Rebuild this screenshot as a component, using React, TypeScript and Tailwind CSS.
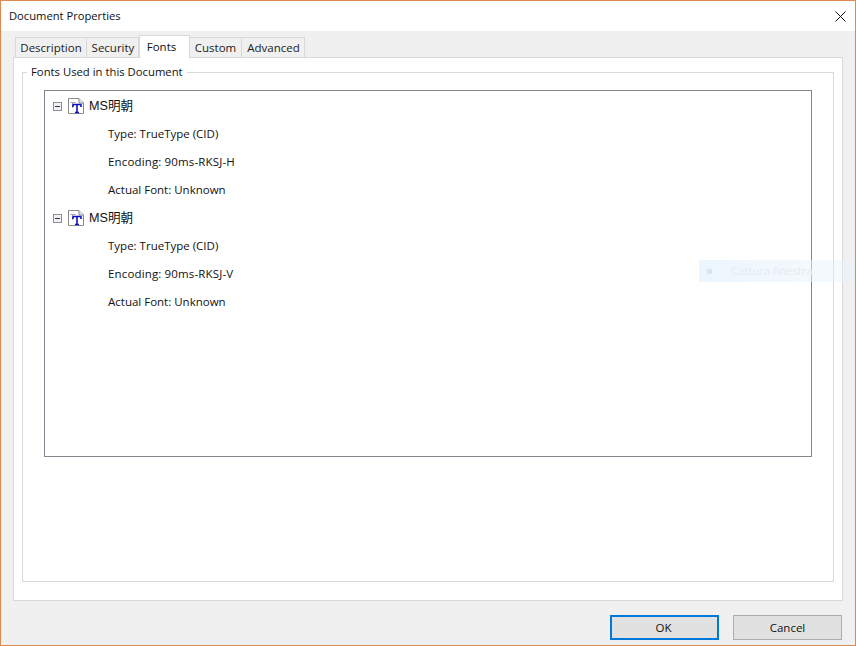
import React from "react";

const font = { fontFamily: '"Open Sans","Noto Sans CJK JP",sans-serif' };

function FontIcon() {
  return (
    <svg width="16" height="16" viewBox="0 0 16 16" className="shrink-0">
      <path d="M0.5 0.5H11L15.5 5V15.5H0.5Z" fill="#fff" stroke="#8a8a8a" />
      <path d="M11 0.5V5H15.5" fill="#e8e8e8" stroke="#8a8a8a" />
      <path d="M2.5 4.5H7.5M4.5 4.5V10" stroke="#a8a8a8" fill="none" />
      <path d="M4.5 6.5H13.5M5 6.5V9M13 6.5V9M9 6.5V14M7 14.5H11" stroke="#1010c8" strokeWidth="1.6" fill="none" />
    </svg>
  );
}

function FontEntry({ encoding }: { encoding: string }) {
  return (
    <div className="flex flex-col">
      <div className="flex h-[28px] items-center">
        <span className="flex h-[9px] w-[9px] items-center justify-center border border-[#8e8f8f] bg-[#eef0f5]">
          <span className="h-px w-[5px] bg-[#333]" />
        </span>
        <span className="ml-[6px]"><FontIcon /></span>
        <span className="ml-[5px] font-['Liberation_Sans','Noto_Sans_CJK_JP',sans-serif] text-[12.6px] text-[#111]">MS明朝</span>
      </div>
      <div className="flex h-[28px] items-center pl-[55px] text-[11.5px] text-[#111]">Type: TrueType (CID)</div>
      <div className="flex h-[28px] items-center pl-[55px] text-[11.5px] tracking-[0.15px] text-[#111]">{`Encoding: ${encoding}`}</div>
      <div className="flex h-[28px] items-center pl-[55px] text-[11.5px] text-[#111]">Actual Font: Unknown</div>
    </div>
  );
}

export default function App() {
  const tab = "flex h-[20px] items-center justify-center border border-b-0 border-[#d9d9d9] bg-[#f0f0f0] pt-px text-[11.5px] text-[#222]";
  return (
    <div style={font} className="relative flex h-[646px] w-[856px] flex-col overflow-hidden border border-[#dc8a52] bg-[#f0f0f0]">
      <div className="flex h-[30px] shrink-0 items-center justify-between bg-white pl-2 pr-[9px]">
        <span className="text-[11.2px] text-[#111]">Document Properties</span>
        <svg width="11" height="11" viewBox="0 0 11 11">
          <path d="M0.5 0.5L10.5 10.5M10.5 0.5L0.5 10.5" stroke="#111" strokeWidth="1" fill="none" />
        </svg>
      </div>
      <div className="flex min-h-0 flex-1 flex-col pl-3 pr-3">
        <div className="flex h-[26px] shrink-0 items-end pl-[2px]">
          <div className={`${tab} w-[72px]`}>Description</div>
          <div className={`${tab} w-[52px] border-l-0 pl-px`}>Security</div>
          <div className="relative z-10 -mb-px flex h-[23px] w-[51px] items-center justify-center border border-b-0 border-[#d9d9d9] bg-white pb-[1px] pr-[6px] text-[11.5px] text-[#111]">Fonts</div>
          <div className={`${tab} w-[52px] border-l-0`}>Custom</div>
          <div className={`${tab} w-[63px] border-l-0 pl-px`}>Advanced</div>
        </div>
        <div className="flex h-[544px] shrink-0 flex-col border border-[#d9d9d9] bg-white px-[8px] pb-[18px] pt-[6px]">
          <fieldset className="flex min-h-0 flex-1 flex-col border border-[#d9d9d9] pl-[21px] pr-[21px] pt-[10px]">
            <legend className="-ml-[17px] px-[4px] text-[11.3px] leading-[16px] text-[#111]">Fonts Used in this Document</legend>
            <div className="h-[367px] w-[768px] border border-[#828790] bg-white pl-2 pt-[1px]">
              <FontEntry encoding="90ms-RKSJ-H" />
              <FontEntry encoding="90ms-RKSJ-V" />
            </div>
          </fieldset>
        </div>
        <div className="flex flex-1 items-start justify-end gap-[14px] pr-px pt-[14px]">
          <button className="flex h-[25px] w-[109px] items-center justify-center border-2 border-[#0078d7] bg-[#e1e1e1] pr-[2px] text-[11.5px] text-[#111]">OK</button>
          <button className="flex h-[25px] w-[109px] items-center justify-center border border-[#adadad] bg-[#e1e1e1] text-[11.5px] text-[#111]">Cancel</button>
        </div>
      </div>
      <div className="absolute left-[698px] top-[259px] flex h-[22px] w-[157px] items-center bg-gradient-to-r from-[#e8f3fd]/80 to-[#e8f3fd]/40 pl-[8px]">
        <span className="h-[5px] w-[5px] bg-[#d5e6f7]" />
        <span className="ml-[19px] text-[11.2px] text-[#e6eaee]">Cattura finestra</span>
      </div>
    </div>
  );
}
